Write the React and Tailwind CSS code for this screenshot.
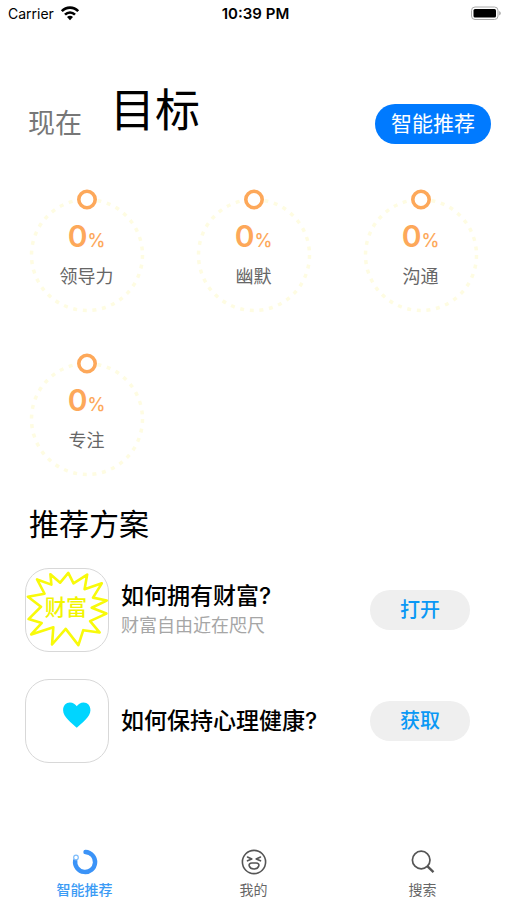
import React from 'react';

const goals = [
  { name: '领导力', value: 0 },
  { name: '幽默', value: 0 },
  { name: '沟通', value: 0 },
  { name: '专注', value: 0 },
];

const WealthArt = () => (
  <svg viewBox="0 0 252 252" className="w-full h-full" fill="none" aria-hidden="true">
    <path
      d="M6 85L57 76L34 32L78 48L75 16L105 42L130 12L146 44L188 17L180 62L233 44L206 88L248 97L202 119L247 137L197 160L226 195L176 188L161 234L122 184L80 232L84 179L16 201L48 166L8 154L46 116Z"
      stroke="#f8fa0a"
      strokeWidth="8"
      strokeLinejoin="round"
    />
    <text x="58" y="142" fontSize="65" fontWeight="500" fontFamily="'Noto Sans CJK SC', sans-serif" fill="#f2f500">
      财富
    </text>
  </svg>
);

const HeartArt = () => (
  <svg viewBox="0 0 84 84" className="w-full h-full" fill="#00d5ff" aria-hidden="true">
    <path d="M52 49C47 44 38 38 38 31C38 26 41 23 45 23C48 23 51 25 52 27C53 25 56 23 59 23C63 23 66 26 66 31C66 38 57 44 52 49Z" />
  </svg>
);

const plans = [
  { title: '如何拥有财富?', desc: '财富自由近在咫尺', action: '打开', art: <WealthArt /> },
  { title: '如何保持心理健康?', action: '获取', art: <HeartArt /> },
];

const StatusBar = () => (
  <div className="grid grid-cols-3 items-center h-7 pl-2 pr-1 text-sm text-black">
    <div className="flex items-center gap-1.5">
      <span>Carrier</span>
      <svg className="w-5 h-4" viewBox="0 0 20 16" fill="none" stroke="#000" strokeWidth="2.6">
        <path d="M1.8 5.2C6.4 0.4 13.6 0.4 18.2 5.2" />
        <path d="M5 8.6C7.9 5.7 12.1 5.7 15 8.6" />
        <path d="M7 11C8.7 9.4 11.3 9.4 13 11L10 14.2Z" fill="#000" stroke="none" />
      </svg>
    </div>
    <span className="text-center text-[15px] font-semibold">10:39 PM</span>
    <svg className="justify-self-end w-8 h-4" viewBox="0 0 32 16">
      <rect x="0.5" y="1" width="26.5" height="12.5" rx="3.5" fill="#fff" stroke="#aaa" />
      <rect x="2.5" y="3" width="22.5" height="8.5" rx="1.5" fill="#000" />
      <path d="M28.2 5C30.4 6 30.4 8.5 28.2 9.5Z" fill="#aaa" />
    </svg>
  </div>
);

const GoalRing = ({ name, value }) => (
  <div className="relative mx-auto flex flex-col items-center w-32 h-32 pt-7">
    <svg className="absolute inset-0 w-full h-full overflow-visible" viewBox="0 0 128 128" fill="none" aria-hidden="true">
      <circle cx="64" cy="63" r="55.5" stroke="#fefce2" strokeWidth="3.5" strokeDasharray="4 5.7" />
      <circle cx="64" cy="7.5" r="8.2" fill="#fff" stroke="#fda85a" strokeWidth="3.6" />
    </svg>
    <div className="relative flex items-baseline leading-8 text-[#fda85a]">
      <span className="text-3xl leading-8 font-semibold">{value}</span>
      <span className="text-lg leading-8 font-medium">%</span>
    </div>
    <span className="relative mt-2 text-lg leading-6 text-[#666]">{name}</span>
  </div>
);

const PlanRow = ({ title, desc, action, art }) => (
  <li className="flex items-center">
    <div className="shrink-0 w-[84px] h-[84px] rounded-3xl border border-[#d8d8d8] overflow-hidden">
      {art}
    </div>
    <div className="flex-1 ml-3">
      <h3 className="text-[23px] leading-8 font-medium text-black">{title}</h3>
      {desc && <p className="text-lg leading-7 text-[#a6a6a6]">{desc}</p>}
    </div>
    <button type="button" className="w-[100px] h-10 rounded-full bg-[#efefef] text-xl leading-8 font-medium text-[#0a98f5]">
      {action}
    </button>
  </li>
);

const TabBar = () => (
  <nav className="mt-auto grid grid-cols-3 text-sm leading-5 text-[#666]">
    <a href="#recommend" className="flex flex-col items-center gap-1 font-medium text-[#3b9bf5]">
      <svg className="w-7 h-7" viewBox="0 0 28 28" fill="none">
        <path d="M14.5 4A10 10 0 1 1 4.2 12.5" stroke="#3b93f7" strokeWidth="4.4" strokeLinecap="round" />
        <circle cx="5" cy="9.5" r="2.3" fill="#fff" stroke="#7dbcfb" strokeWidth="1.2" />
      </svg>
      智能推荐
    </a>
    <a href="#mine" className="flex flex-col items-center gap-1">
      <svg className="w-7 h-7" viewBox="0 0 28 28" fill="none" stroke="#555" strokeWidth="1.6" strokeLinecap="round" strokeLinejoin="round">
        <circle cx="14" cy="14" r="11.6" />
        <path d="M7.5 9L11.8 11L7.5 12.8M20.5 9L16.2 11L20.5 12.8" />
        <path d="M12 15H16C21 15 19 21 14 21C9 21 7 15 12 15Z" />
      </svg>
      我的
    </a>
    <a href="#search" className="flex flex-col items-center gap-1">
      <svg className="w-7 h-7" viewBox="0 0 28 28" fill="none" stroke="#555">
        <circle cx="12.2" cy="12" r="8.8" strokeWidth="1.7" />
        <path d="M18.3 18.2L24.5 24.2" strokeWidth="2.4" />
      </svg>
      搜索
    </a>
  </nav>
);

const App = () => {
  return (
    <div className="flex flex-col min-h-screen bg-white font-[Inter,'Noto_Sans_CJK_SC',sans-serif]">
      <StatusBar />

      <header className="flex items-end pt-[58px] pl-7 pr-4">
        <button type="button" className="text-[27px] leading-10 text-[#777]">现在</button>
        <button type="button" className="ml-7 mb-2 text-[45px] leading-[50px] text-black">目标</button>
        <button type="button" className="ml-auto h-10 px-4 rounded-full bg-[#007aff] text-[21px] leading-8 text-white">
          智能推荐
        </button>
      </header>

      <section className="grid grid-cols-3 gap-y-9 mt-12 px-[3px]">
        {goals.map((goal) => (
          <GoalRing key={goal.name} {...goal} />
        ))}
      </section>

      <section className="mt-5 pl-[25px] pr-[37px]">
        <h2 className="pl-1 text-3xl leading-10 text-black">推荐方案</h2>
        <ul className="flex flex-col gap-[27px] mt-6">
          {plans.map((plan) => (
            <PlanRow key={plan.title} {...plan} />
          ))}
        </ul>
      </section>

      <TabBar />
    </div>
  );
};

export default App;
